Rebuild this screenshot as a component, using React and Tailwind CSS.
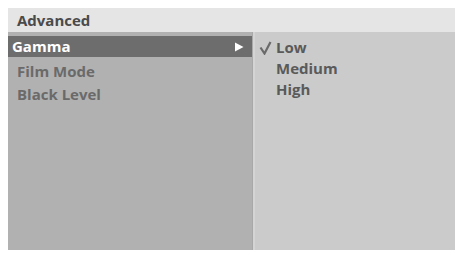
export default function App() {
  const left = ['Film Mode', 'Black Level'];
  const right = ['Medium', 'High'];
  return (
    <div className="w-[459px] h-[254px] bg-white pt-2 pl-2 pr-1 pb-1" style={{ fontFamily: '"Open Sans", sans-serif' }}>
      <div className="flex flex-col w-[447px] h-[242px]">
        <div className="h-6 bg-[#e5e5e5] flex items-center pl-[9px] text-[15px] font-bold text-[#4a4a4a]">
          Advanced
        </div>
        <div className="flex flex-1">
          <div className="w-[245px] bg-[#b1b1b1] pt-1 border-r border-[#a8a8a8]">
            <div className="h-[21px] bg-[#6d6d6d] flex items-center justify-between pl-1 pr-2 text-[15px] font-bold text-white">
              <span>Gamma</span>
              <svg width="10" height="10" viewBox="0 0 10 10"><path d="M1 0.5 L9.5 5 L1 9.5 Z" fill="#fff" /></svg>
            </div>
            <div className="flex flex-col pl-[9px] pt-[4px] gap-[2px]">
              {left.map((t) => (
                <div key={t} className="h-[21px] flex items-center text-[15px] font-bold text-[#6a6a6a]">{t}</div>
              ))}
            </div>
          </div>
          <div className="flex-1 bg-[#cbcbcb] border-l-2 border-[#d4d4d4] pt-[5px] pl-[4px]">
            <div className="h-[21px] flex items-center text-[15px] font-bold text-[#5a5a5a]">
              <svg width="17" height="14" viewBox="0 0 17 14" className="shrink-0">
                <path d="M1.5 6.5 L5.5 12.5 L11.5 1" stroke="#6a6a6a" strokeWidth="2.2" fill="none" />
              </svg>
              <span>Low</span>
            </div>
            {right.map((t) => (
              <div key={t} className="h-[21px] flex items-center pl-[17px] text-[15px] font-bold text-[#5a5a5a]">{t}</div>
            ))}
          </div>
        </div>
      </div>
    </div>
  );
}
